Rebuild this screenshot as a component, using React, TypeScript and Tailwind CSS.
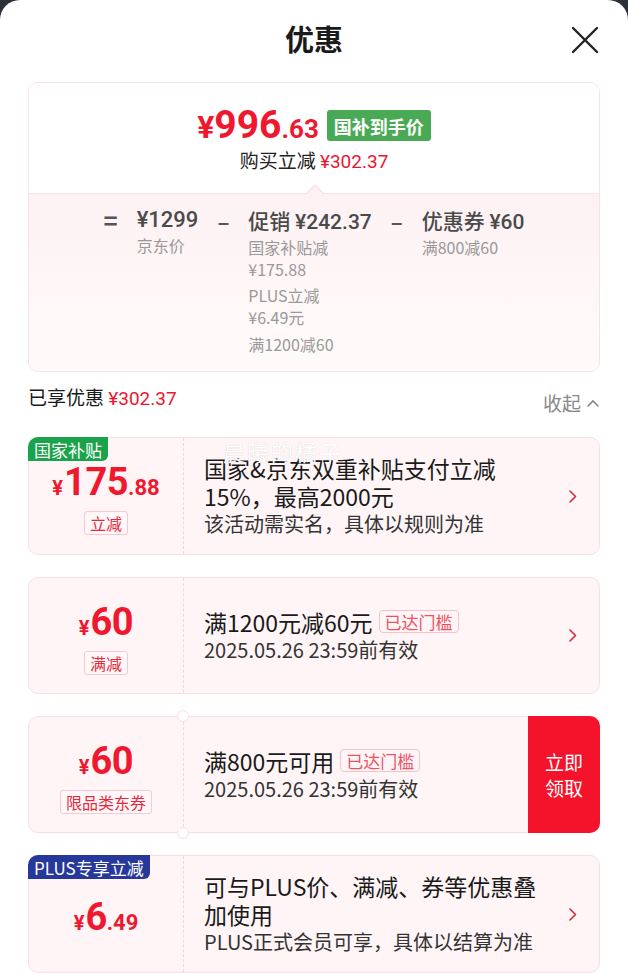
import React from "react";

const cn = "font-['Noto_Sans_CJK_SC',sans-serif]";
const num = "font-[Roboto,'Noto_Sans_CJK_SC',sans-serif]";

const Chevron = () => (
  <svg width="9" height="15" viewBox="0 0 9 15" fill="none">
    <path d="M2 2l5.5 5.5L2 13" stroke="#d9283a" strokeWidth="1.6" strokeLinecap="round" strokeLinejoin="round" />
  </svg>
);

const Tag = ({ text }: { text: string }) => (
  <span className="inline-flex items-center h-[24px] px-[5px] rounded-[3px] border border-[#f5c9cf] bg-[#fff7f8] text-[16px] leading-none text-[#e8283c]">
    {text}
  </span>
);

const Reached = () => (
  <span className="inline-flex items-center h-[23px] px-[5px] ml-[6px] rounded-[4px] border border-[#f5c2c9] text-[17px] leading-none text-[#ec5466]">
    已达门槛
  </span>
);

type Price = { big: string; small?: string };

const PriceText = ({ big, small }: Price) => (
  <div className={`${num} flex items-baseline text-[#f0182f] font-bold leading-none`}>
    <span className="text-[20px] mr-[1px]">¥</span>
    <span className="text-[38px] tracking-[-0.5px]">{big}</span>
    {small && <span className="text-[22px]">{small}</span>}
  </div>
);

const Card = ({
  price,
  tag,
  badge,
  badgeColor,
  children,
  button,
  notch,
  height,
  watermark,
}: {
  price: Price;
  tag?: string;
  badge?: string;
  badgeColor?: string;
  children: React.ReactNode;
  button?: boolean;
  notch?: boolean;
  height: string;
  watermark?: boolean;
}) => (
  <div className={`relative flex ${height} rounded-[10px] border border-[#f7e0e4] bg-[#fff5f6]`}>
    {badge && (
      <div
        className={`absolute -left-px -top-px h-[24px] px-[6px] flex items-center rounded-tl-[10px] rounded-br-[6px] text-white text-[17px] leading-none ${badgeColor}`}
      >
        {badge}
      </div>
    )}
    {watermark && (
      <div className="absolute left-[194px] top-[1px] text-[22px] leading-[24px] text-white tracking-[2px] pointer-events-none [text-shadow:0_0_1px_rgba(120,120,120,0.35)]">
        晨曦的橘子
      </div>
    )}
    <div className="w-[155px] shrink-0 flex flex-col items-center justify-center gap-[10px] pt-[6px] border-r border-dashed border-[#f3d6da] relative">
      <PriceText {...price} />
      {tag && <Tag text={tag} />}
      {notch && (
        <>
          <div className="absolute -right-[6px] -top-[7px] w-[12px] h-[12px] rounded-full bg-white border border-[#f7e0e4]" />
          <div className="absolute -right-[6px] -bottom-[7px] w-[12px] h-[12px] rounded-full bg-white border border-[#f7e0e4]" />
        </>
      )}
    </div>
    <div className="flex-1 flex items-center pl-[20px] pr-[22px]">
      <div className="flex-1 text-[#1a1a1a]">{children}</div>
      {!button && <Chevron />}
    </div>
    {button && (
      <div className="w-[72px] -my-px -mr-px shrink-0 flex flex-col items-center justify-center rounded-r-[10px] bg-[#f5132c] text-white text-[19px] leading-[26px]">
        <span>立即</span>
        <span>领取</span>
      </div>
    )}
  </div>
);

export default function App() {
  return (
    <div className={`${cn} w-[628px] h-[973px] bg-[#2b3039] overflow-hidden`}>
      <div className="h-full bg-white rounded-t-[20px] px-[28px]">
        <div className="relative h-[82px] flex items-center justify-center pb-[4px]">
          <h1 className="text-[29px] font-bold text-[#1a1a1a]">优惠</h1>
          <svg className="absolute right-[1px] top-[26px]" width="28" height="28" viewBox="0 0 28 28">
            <path d="M2 2l24 24M26 2L2 26" stroke="#222" strokeWidth="2.4" strokeLinecap="round" />
          </svg>
        </div>

        <div className="rounded-[10px] border border-[#f7e2e5] overflow-hidden">
          <div className="relative h-[110px] bg-white flex flex-col items-center pt-[23px]">
            <div className="flex items-center gap-[8px]">
              <div className={`${num} flex items-baseline text-[#f0182f] font-bold leading-none`}>
                <span className="text-[32px]">¥</span>
                <span className="text-[39px]">996</span>
                <span className="text-[26px]">.63</span>
              </div>
              <span className="h-[31px] px-[7px] flex items-center rounded-[3px] bg-[#4aa955] text-white text-[18px] font-bold leading-none">
                国补到手价
              </span>
            </div>
            <div className="mt-[2px] text-[19px] text-[#222] leading-[26px]">
              购买立减 <span className={`${num} text-[#e8182f]`}>¥302.37</span>
            </div>
            <div className="absolute left-[276px] -bottom-px w-0 h-0 border-x-[10px] border-x-transparent border-b-[10px] border-b-[#f7e2e5]" />
            <div className="absolute left-[277px] -bottom-[2px] w-0 h-0 border-x-[9px] border-x-transparent border-b-[9px] border-b-[#fdf1f3]" />
          </div>
          <div className="h-[178px] border-t border-[#f7e2e5] bg-gradient-to-b from-[#fdf1f3] to-[#fffbfb] flex justify-center pt-[12px] gap-[19px] text-[#4a4a4a]">
            <span className="text-[24px] font-bold leading-[28px] text-[#555]">=</span>
            <div>
              <div className={`${num} text-[22px] leading-[28px] font-medium`}>¥1299</div>
              <div className="text-[16px] text-[#999] leading-[22px]">京东价</div>
            </div>
            <span className="text-[22px] font-bold leading-[28px] text-[#555]">–</span>
            <div>
              <div className="text-[21px] leading-[28px] font-medium">
                促销 <span className={num}>¥242.37</span>
              </div>
              <div className="text-[16px] text-[#999] leading-[22px]">
                <div>国家补贴减</div>
                <div>¥175.88</div>
                <div className="mt-[4px]">PLUS立减</div>
                <div>¥6.49元</div>
                <div className="mt-[5px]">满1200减60</div>
              </div>
            </div>
            <span className="text-[22px] font-bold leading-[28px] text-[#555]">–</span>
            <div>
              <div className="text-[21px] leading-[28px] font-medium">
                优惠券 <span className={num}>¥60</span>
              </div>
              <div className="text-[16px] text-[#999] leading-[22px]">满800减60</div>
            </div>
          </div>
        </div>

        <div className="flex justify-between items-start h-[42px] pt-[12px] mb-[23px]">
          <div className="text-[19px] text-[#1a1a1a] leading-[26px]">
            已享优惠 <span className={`${num} text-[#e8182f]`}>¥302.37</span>
          </div>
          <div className="flex items-center gap-[5px] text-[19px] text-[#888] leading-[26px] mt-[6px]">
            收起
            <svg width="14" height="10" viewBox="0 0 14 10">
              <path d="M2 8l5-5 5 5" stroke="#888" strokeWidth="1.6" fill="none" strokeLinecap="round" />
            </svg>
          </div>
        </div>

        <div className="flex flex-col gap-[22px]">
          <Card
            height="h-[118px]"
            price={{ big: "175", small: ".88" }}
            tag="立减"
            badge="国家补贴"
            badgeColor="bg-[#1aa34a]"
            watermark
          >
            <div className="text-[23px] leading-[28px]">国家&京东双重补贴支付立减</div>
            <div className="text-[23px] leading-[28px]">15%，最高2000元</div>
            <div className="text-[20px] leading-[28px] text-[#333]">该活动需实名，具体以规则为准</div>
          </Card>
          <Card height="h-[117px]" price={{ big: "60" }} tag="满减">
            <div className="flex items-center text-[23px] leading-[28px]">
              满1200元减60元
              <Reached />
            </div>
            <div className="text-[20px] leading-[28px] text-[#333]">2025.05.26 23:59前有效</div>
          </Card>
          <Card height="h-[117px]" price={{ big: "60" }} tag="限品类东券" button notch>
            <div className="flex items-center text-[23px] leading-[28px]">
              满800元可用
              <Reached />
            </div>
            <div className="text-[20px] leading-[28px] text-[#333]">2025.05.26 23:59前有效</div>
          </Card>
          <Card
            height="h-[118px]"
            price={{ big: "6", small: ".49" }}
            badge="PLUS专享立减"
            badgeColor="bg-[#26399a]"
          >
            <div className="text-[23px] leading-[28px] whitespace-nowrap">可与PLUS价、满减、券等优惠叠</div>
            <div className="text-[23px] leading-[28px]">加使用</div>
            <div className="text-[20px] leading-[28px] text-[#333] whitespace-nowrap">PLUS正式会员可享，具体以结算为准</div>
          </Card>
        </div>
      </div>
    </div>
  );
}
